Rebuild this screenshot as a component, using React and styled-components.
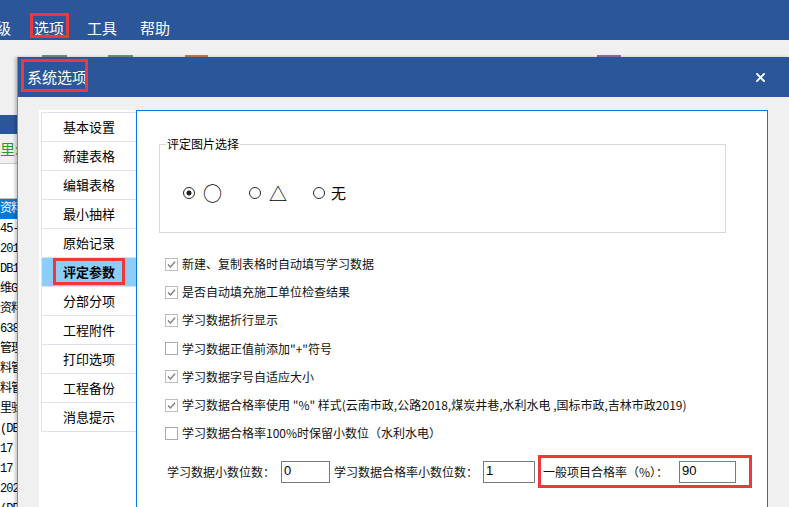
import React from 'react';
import styled, { createGlobalStyle } from 'styled-components';

const CJK = `"Noto Sans CJK SC", "Noto Sans", sans-serif`;

const GlobalStyle = createGlobalStyle`
  html, body { margin: 0; padding: 0; width: 789px; height: 507px; overflow: hidden; background: #f0f0f0; }
  body { font-family: ${CJK}; }
  * { box-sizing: border-box; }
`;

const Screen = styled.div`
  width: 789px; height: 507px; overflow: hidden;
  display: flex; flex-direction: column; background: #f0f0f0;
`;

/* ---------- red annotation frame ---------- */
const Marked = styled.span`
  position: relative; display: inline-flex; align-items: center;
  &::after {
    content: ''; position: absolute; pointer-events: none;
    top: ${p => -p.$t}px; right: ${p => -p.$r}px; bottom: ${p => -p.$b}px; left: ${p => -p.$l}px;
    border: 3px solid #ef3838;
  }
`;

/* ---------- app menu bar ---------- */
const MenuBar = styled.div`
  height: 40px; flex: none; background: #2b579a;
  display: flex; align-items: flex-start; gap: 23px; padding-top: 17px;
`;
const MenuItem = styled.span`
  color: #fff; font-size: 15px; line-height: 22px; white-space: nowrap;
  &:first-child { margin-left: -4px; }
`;

/* ---------- app toolbar behind dialog ---------- */
const BackToolbar = styled.div`
  height: 17px; flex: none; display: flex; align-items: flex-end;
`;
const TabBit = styled.span`
  flex: none; height: 2px; width: ${p => p.$w}px; margin-left: ${p => p.$x}px; background: ${p => p.$c};
`;

const Workspace = styled.div`
  flex: 1; min-height: 0; display: flex;
`;

/* ---------- app content sliver at the left ---------- */
const BackStrip = styled.div`
  width: 17px; flex: none; display: flex; flex-direction: column; overflow: hidden;
`;
const BackGap = styled.div` height: 58px; flex: none; `;
const BackBlueBar = styled.div` height: 19px; flex: none; background: #2b579a; `;
const BackStatus = styled.div`
  height: 30px; flex: none; border-bottom: 1px solid #c9c9c9;
  color: #2f962f; font-size: 15px; line-height: 29px; white-space: nowrap;
`;
const BackBlank = styled.div`
  height: 35px; flex: none; background: #fff; border-bottom: 1px solid #c4c4c4;
`;
const BackRow = styled.div`
  height: 20px; flex: none; line-height: 20px; font-size: 12px; white-space: nowrap;
  font-family: "Liberation Mono", ${CJK};
  letter-spacing: -1px;
  background: ${p => (p.$sel ? '#0a78d4' : '#fff')};
  color: ${p => (p.$sel ? '#fff' : '#000')};
  padding-left: ${p => p.$x}px;
`;
const BackFill = styled.div` flex: 1; background: #fff; `;

/* ---------- dialog ---------- */
const Dialog = styled.section`
  flex: 1; min-width: 0; display: flex; flex-direction: column;
  border-left: 1px solid #8a8a8a; box-shadow: -2px 0 3px rgba(0,0,0,0.22);
  background: #f0f0f0;
`;
const TitleBar = styled.div`
  height: 40px; flex: none; background: #2b579a;
  display: flex; align-items: center; justify-content: space-between;
  padding: 0 24px 0 9px;
`;
const TitleText = styled.span`
  color: #fff; font-size: 15px; line-height: 20px; white-space: nowrap;
`;
const CloseButton = styled.span`
  display: flex; width: 9px; height: 9px; margin-top: 1px;
`;
const Body = styled.div`
  flex: 1; min-height: 0; display: flex; padding: 13px 21px 0 21px;
`;

/* ---------- left navigation ---------- */
const NavPanel = styled.nav`
  width: 97px; flex: none; background: #fff; padding: 2px 0 0 2px;
  display: flex; flex-direction: column;
`;
const NavItem = styled.div`
  height: 29px; flex: none; display: flex; align-items: center; justify-content: center;
  border-top: 1px solid #e1e1f3; border-left: 1px solid #e1e1f3;
  font-size: 13px; color: #000; white-space: nowrap;
  background: ${p => (p.$active ? '#8ecdf8' : '#fff')};
  font-weight: ${p => (p.$active ? 700 : 400)};
  &:last-child { height: 30px; border-bottom: 1px solid #e1e1f3; }
`;
const NavLabel = styled.span` line-height: 18px; `;

/* ---------- content panel ---------- */
const ContentPanel = styled.div`
  flex: 1; min-width: 0; background: #fff;
  border: 1px solid #0b78d6; border-bottom: none;
  display: flex; flex-direction: column;
`;
const Group = styled.fieldset`
  margin: 25px 41px 0 22px; padding: 31px 0 29px 6px; min-width: 0;
  border: 1px solid #d9d9d9;
`;
const GroupTitle = styled.legend`
  padding: 0 1px; font-size: 12px; line-height: 16px; color: #000;
`;
const RadioRow = styled.div`
  height: 20px; display: flex; align-items: center; margin-left: 17px;
`;
const RadioOption = styled.label`
  display: flex; align-items: center; flex: none; width: ${p => p.$w}px;
`;
const RadioMark = styled.span`
  width: 12px; height: 12px; flex: none; border-radius: 50%;
  border: 1px solid #2a2a2a;
  background: ${p => (p.$on ? 'radial-gradient(circle, #1e1e1e 0 2.2px, #fff 2.8px)' : '#fff')};
`;
const ShapeLabel = styled.span`
  margin-left: ${p => p.$gap}px; font-size: ${p => p.$size}px; line-height: 20px; color: #000;
`;

const CheckList = styled.div`
  margin-top: 17px; display: flex; flex-direction: column;
`;
const CheckRow = styled.label`
  height: 28.2px; flex: none; display: flex; align-items: center; gap: 4px;
  padding-left: 28px; font-size: 12px; line-height: 16px; color: #111; white-space: nowrap;
`;
const CheckBox = styled.span`
  width: 13px; height: 13px; flex: none; display: flex;
  border: 1px solid ${p => (p.$on ? '#bdbdbd' : '#ababab')};
  background: #fff;
`;

const FieldRow = styled.div`
  margin-top: 14px; display: flex; align-items: center; padding-left: 30px;
`;
const FieldLabel = styled.span`
  flex: none; width: ${p => p.$w}px; font-size: 12px; line-height: 16px; color: #111; white-space: nowrap;
`;
const NumberBox = styled.input`
  flex: none; width: ${p => p.$w}px; height: 22px; margin: 0;
  border: 1px solid #7a7a7a; border-radius: 0; background: #fff; outline: none;
  padding: 0 2px 3px; font-family: "Liberation Sans", Arial, sans-serif; font-size: 13px; color: #000;
`;

const CheckIcon = () => (
  <svg width="11" height="11" viewBox="0 0 11 11">
    <path d="M2 5.6 L4.4 8 L9 2.8" fill="none" stroke="#7f7f7f" strokeWidth="1.4" />
  </svg>
);

const CloseIcon = () => (
  <svg width="9" height="9" viewBox="0 0 9 9">
    <path d="M1 1 L8 8 M8 1 L1 8" stroke="#fff" strokeWidth="1.9" strokeLinecap="square" />
  </svg>
);

const navItems = ['基本设置', '新建表格', '编辑表格', '最小抽样', '原始记录', '评定参数', '分部分项', '工程附件', '打印选项', '工程备份', '消息提示'];

const checks = [
  { on: true, t: '新建、复制表格时自动填写学习数据' },
  { on: true, t: '是否自动填充施工单位检查结果' },
  { on: true, t: '学习数据折行显示' },
  { on: false, t: '学习数据正值前添加"+"符号' },
  { on: true, t: '学习数据字号自适应大小' },
  { on: true, t: '学习数据合格率使用 "%" 样式(云南市政,公路2018,煤炭井巷,水利水电 ,国标市政,吉林市政2019)' },
  { on: false, t: '学习数据合格率100%时保留小数位（水利水电）' },
];

const backRows = [
  { t: '资料', x: -1, sel: true },
  { t: '45-0', x: -2 },
  { t: '2016', x: 0 },
  { t: ' DB1', x: 0 },
  { t: '维GB', x: -3 },
  { t: '资料', x: 0 },
  { t: ' 638', x: 0 },
  { t: '管理', x: 0 },
  { t: '料管', x: -2 },
  { t: '料管', x: -2 },
  { t: '里验', x: -4 },
  { t: '(DB1', x: 0 },
  { t: '17 0', x: 0 },
  { t: '17 0', x: 0 },
  { t: '2020', x: 0 },
  { t: '(DB1', x: 0 },
];

export default function App() {
  return (
    <Screen>
      <GlobalStyle />
      <MenuBar>
        <MenuItem>级</MenuItem>
        <MenuItem>
          <Marked $t={4} $r={5} $b={-1} $l={4}>选项</Marked>
        </MenuItem>
        <MenuItem>工具</MenuItem>
        <MenuItem>帮助</MenuItem>
      </MenuBar>
      <BackToolbar>
        <TabBit $x={42} $w={25} $c="#6d9186" />
        <TabBit $x={41} $w={25} $c="#6f9382" />
        <TabBit $x={52} $w={23} $c="#b57d5e" />
        <TabBit $x={389} $w={24} $c="#8f6f9f" />
      </BackToolbar>
      <Workspace>
        <BackStrip>
          <BackGap />
          <BackBlueBar />
          <BackStatus>里:</BackStatus>
          <BackBlank />
          {backRows.map((r, i) => (
            <BackRow key={i} $sel={r.sel} $x={r.x}>{r.t}</BackRow>
          ))}
          <BackFill />
        </BackStrip>
        <Dialog>
          <TitleBar>
            <Marked $t={8} $r={1} $b={5} $l={6}>
              <TitleText>系统选项</TitleText>
            </Marked>
            <CloseButton><CloseIcon /></CloseButton>
          </TitleBar>
          <Body>
            <NavPanel>
              {navItems.map(n => (
                <NavItem key={n} $active={n === '评定参数'}>
                  {n === '评定参数' ? (
                    <Marked $t={5} $r={10} $b={4} $l={10}><NavLabel>{n}</NavLabel></Marked>
                  ) : (
                    <NavLabel>{n}</NavLabel>
                  )}
                </NavItem>
              ))}
            </NavPanel>
            <ContentPanel>
              <Group>
                <GroupTitle>评定图片选择</GroupTitle>
                <RadioRow>
                  <RadioOption $w={66}>
                    <RadioMark $on />
                    <ShapeLabel $gap={8} $size={19}>○</ShapeLabel>
                  </RadioOption>
                  <RadioOption $w={64}>
                    <RadioMark />
                    <ShapeLabel $gap={8} $size={18}>△</ShapeLabel>
                  </RadioOption>
                  <RadioOption $w={60}>
                    <RadioMark />
                    <ShapeLabel $gap={6} $size={15}>无</ShapeLabel>
                  </RadioOption>
                </RadioRow>
              </Group>
              <CheckList>
                {checks.map((c, i) => (
                  <CheckRow key={i}>
                    <CheckBox $on={c.on}>{c.on && <CheckIcon />}</CheckBox>
                    <span>{c.t}</span>
                  </CheckRow>
                ))}
              </CheckList>
              <FieldRow>
                <FieldLabel $w={114}>学习数据小数位数：</FieldLabel>
                <NumberBox $w={49} defaultValue="0" readOnly />
                <FieldLabel $w={149} style={{ marginLeft: 4 }}>学习数据合格率小数位数：</FieldLabel>
                <NumberBox $w={52} defaultValue="1" readOnly />
                <Marked $t={6} $r={16} $b={5} $l={5} style={{ marginLeft: 8 }}>
                  <FieldLabel $w={136}>一般项目合格率（%）：</FieldLabel>
                  <NumberBox $w={57} defaultValue="90" readOnly />
                </Marked>
              </FieldRow>
            </ContentPanel>
          </Body>
        </Dialog>
      </Workspace>
    </Screen>
  );
}
